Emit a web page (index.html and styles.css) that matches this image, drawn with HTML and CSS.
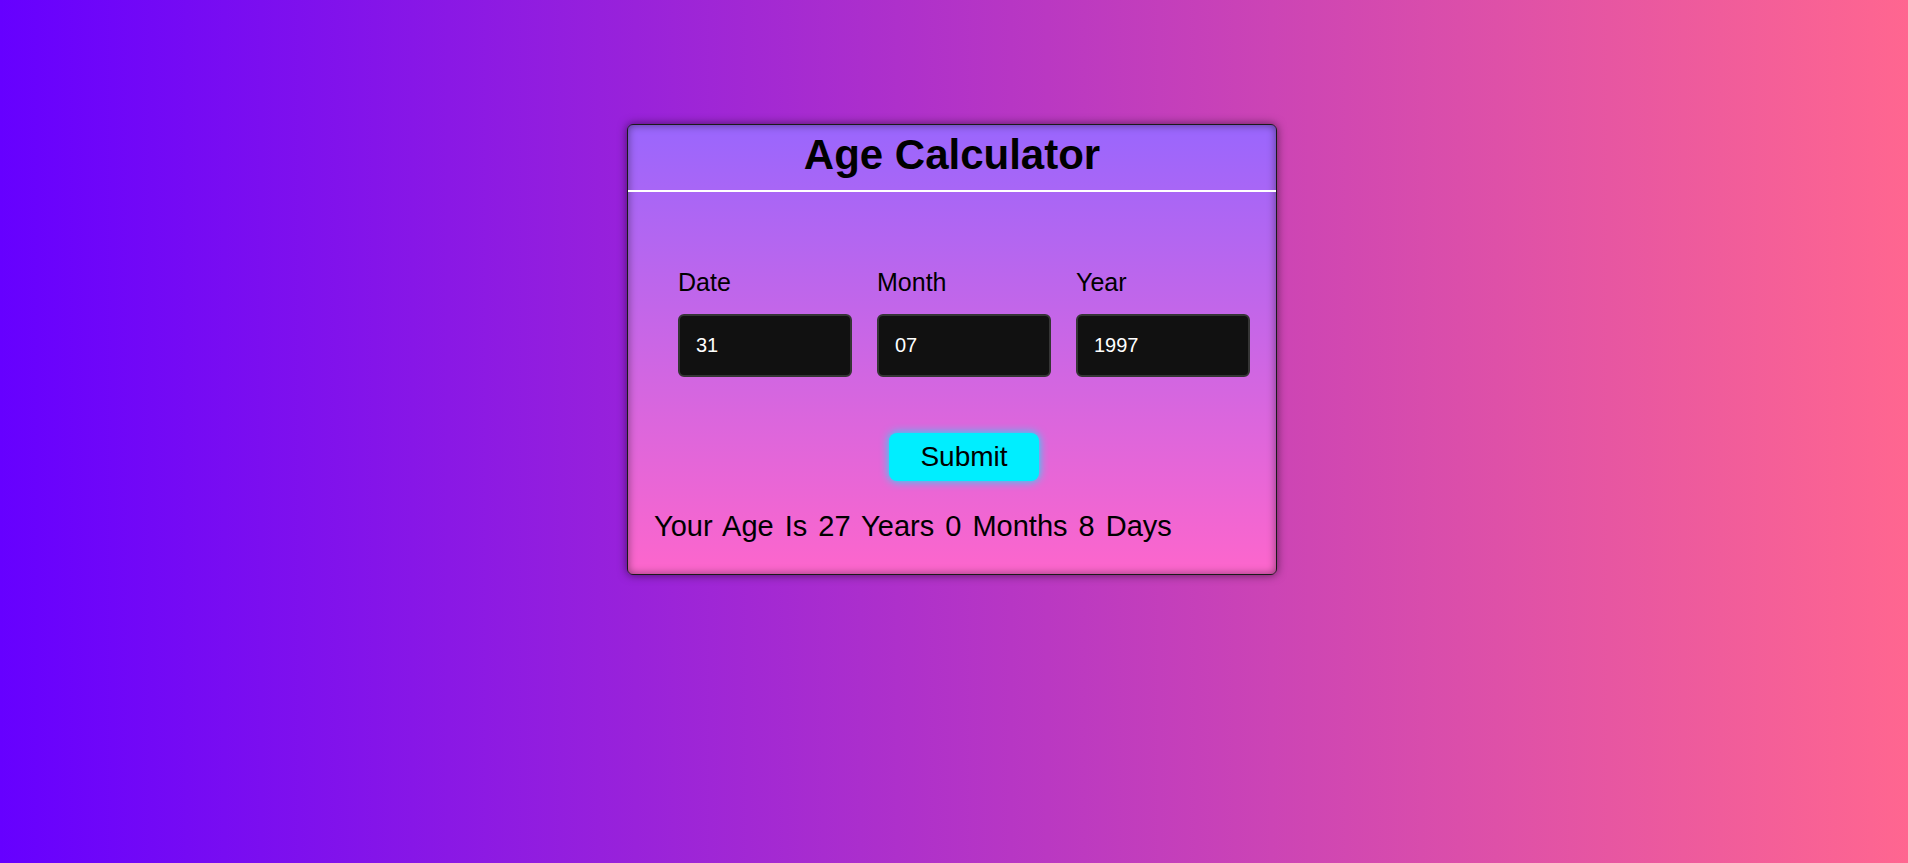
FILE: index.html
```html
<!DOCTYPE html>
<html lang="en">
<head>
<meta charset="utf-8">
<title>Age Calculator</title>
<link rel="stylesheet" href="styles.css">
</head>
<body>
<main class="page">
  <section class="card">
    <h1 class="title">Age Calculator</h1>
    <div class="body">
      <div class="form">
        <div class="fields">
          <label class="field">
            <span class="label">Date</span>
            <input class="input" type="text" value="31">
          </label>
          <label class="field">
            <span class="label">Month</span>
            <input class="input" type="text" value="07">
          </label>
          <label class="field">
            <span class="label">Year</span>
            <input class="input" type="text" value="1997">
          </label>
        </div>
        <div class="actions">
          <button class="submit" type="button">Submit</button>
        </div>
      </div>
      <p class="result">Your Age Is 27 Years 0 Months 8 Days</p>
    </div>
  </section>
</main>
</body>
</html>
```

FILE: styles.css
```css
html, body {
  margin: 0;
  height: 100%;
}

body {
  background: linear-gradient(to right, #6600ff, #ff6690);
  font-family: "Liberation Sans", Arial, sans-serif;
  color: #000;
}

.page {
  display: flex;
  justify-content: center;
  padding: 124px 4px 0 0;
}

.card {
  width: 648px;
  border: 1px solid #1a1a1a;
  border-radius: 6px;
  background: linear-gradient(to bottom, #9a66fd, #fd66cc);
  box-shadow: 0 0 10px rgba(0, 0, 0, 0.55), inset 0 0 8px rgba(0, 0, 0, 0.45);
  box-sizing: content-box;
}

.title {
  margin: 0;
  height: 65px;
  line-height: 60px;
  text-align: center;
  font-size: 42px;
  font-weight: bold;
  border-bottom: 2px solid #fff;
}

.body {
  padding: 76px 26px 32px 26px;
}

.form {
  padding-left: 24px;
}

.fields {
  display: flex;
  gap: 25px;
}

.field {
  display: flex;
  flex-direction: column;
  width: 174px;
}

.label {
  font-size: 25px;
  line-height: 29px;
  margin-bottom: 17px;
}

.input {
  box-sizing: border-box;
  width: 174px;
  height: 63px;
  background: #111;
  border: 2px solid #353535;
  border-radius: 6px;
  color: #fff;
  font-family: "Liberation Sans", Arial, sans-serif;
  font-size: 20px;
  padding: 0 0 0 16px;
  outline: none;
}

.actions {
  display: flex;
  justify-content: center;
  margin-top: 56px;
}

.submit {
  width: 150px;
  height: 48px;
  border: none;
  border-radius: 8px;
  background: #00eeff;
  color: #000;
  font-family: "Liberation Sans", Arial, sans-serif;
  font-size: 28px;
  box-shadow: 0 0 10px #00eeff;
  padding: 0;
}

.result {
  margin: 29px 0 0 0;
  font-size: 29px;
  line-height: 32px;
  word-spacing: 3px;
}
```
